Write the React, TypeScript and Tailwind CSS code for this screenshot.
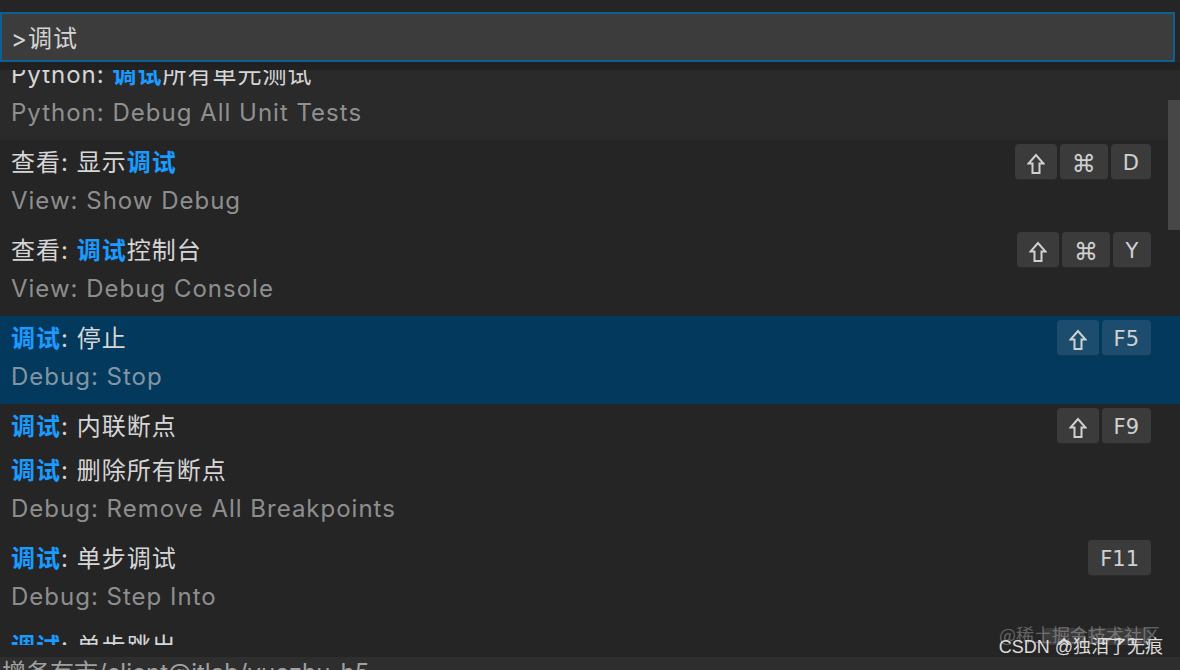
import { Fragment } from 'react'

const FONT = "font-['Inter','Noto_Sans_CJK_SC',sans-serif]"

type Item = {
    title: string
    detail?: string
    keys?: string[]
    selected?: boolean
    hover?: boolean
    clip?: boolean
    pull?: boolean
}

const items: Item[] = [
    {
        title: 'Python: [调试]所有单元测试',
        detail: 'Python: Debug All Unit Tests',
        hover: true,
        pull: true,
    },
    {
        title: '查看: 显示[调试]',
        detail: 'View: Show Debug',
        keys: ['shift', '⌘', 'D'],
    },
    {
        title: '查看: [调试]控制台',
        detail: 'View: Debug Console',
        keys: ['shift', '⌘', 'Y'],
    },
    {
        title: '[调试]: 停止',
        detail: 'Debug: Stop',
        keys: ['shift', 'F5'],
        selected: true,
    },
    { title: '[调试]: 内联断点', keys: ['shift', 'F9'] },
    { title: '[调试]: 删除所有断点', detail: 'Debug: Remove All Breakpoints' },
    { title: '[调试]: 单步调试', detail: 'Debug: Step Into', keys: ['F11'] },
    { title: '[调试]: 单步跳出', keys: ['shift', 'F11'], clip: true },
]

// splits "[..]" parts out as the matched (blue) text
function Highlight({ text }: { text: string }) {
    const parts = text.split(/(\[[^\]]+\])/)
    return (
        <>
            {parts.map((p, i) =>
                p.startsWith('[') ? (
                    <span key={i} className="text-[#1a9bff] font-bold">
                        {p.slice(1, -1)}
                    </span>
                ) : (
                    <Fragment key={i}>{p}</Fragment>
                )
            )}
        </>
    )
}

function ShiftIcon() {
    return (
        <svg width="18" height="22" viewBox="0 0 18 22" fill="none">
            <path
                d="M9 2 L1.5 10.5 H5.5 V20 H12.5 V10.5 H16.5 Z"
                stroke="#d0d0d0"
                strokeWidth="2"
                strokeLinejoin="miter"
            />
        </svg>
    )
}

function Key({ label }: { label: string }) {
    return (
        <div
            className={`h-[36px] min-w-[38px] px-3 pt-[4px] flex items-center justify-center rounded-[4px] bg-white/10 border-b border-black/25 text-[#d0d0d0] font-['DejaVu_Sans','Inter',sans-serif] ${label === '⌘' ? 'text-[24px]' : 'text-[21px]'}`}
        >
            {label === 'shift' ? <ShiftIcon /> : label}
        </div>
    )
}

function Row({ item }: { item: Item }) {
    let bg = ''
    if (item.selected) bg = 'bg-[#04395e]'
    else if (item.hover) bg = 'bg-[#2a2a2b]'

    let height = item.detail ? 'h-[88px]' : 'h-[44px]'
    if (item.clip) height = 'h-[21px] overflow-hidden'

    return (
        <div
            className={`${bg} ${height} ${item.pull ? '-mt-[18px]' : ''} relative pl-[11px] pr-[29px] pt-[4px] shrink-0`}
        >
            <div className="flex items-start">
                <div className="flex-1 tracking-[1px]">
                    <div className="h-[38px] leading-[38px] text-[24px] text-[#d6d6d6] whitespace-nowrap">
                        <Highlight text={item.title} />
                    </div>
                    {item.detail && (
                        <div className="h-[38px] leading-[38px] text-[24px] text-[#cccccc]/65 whitespace-nowrap">
                            {item.detail}
                        </div>
                    )}
                </div>
                {item.keys && (
                    <div className="flex gap-[3px]">
                        {item.keys.map((k) => (
                            <Key key={k} label={k} />
                        ))}
                    </div>
                )}
            </div>
        </div>
    )
}

export default function App() {
    return (
        <div
            className={`${FONT} w-[1180px] h-[670px] bg-[#252526] flex flex-col overflow-hidden relative`}
        >
            <div className="pt-[12px] pr-[5px]">
                <div className="h-[50px] bg-[#3c3c3c] border-2 border-[#0e5f94] pl-[9px] pt-[3px] flex items-center text-[24px] tracking-[1px] text-[#d4d4d4]">
                    &gt;调试
                </div>
            </div>
            <div className="h-[8px] bg-[#212121]" />

            <div className="flex-1 relative overflow-hidden flex flex-col">
                {items.map((item, i) => (
                    <Row key={i} item={item} />
                ))}
                {/* scrollbar thumb */}
                <div className="absolute right-0 top-[30px] w-[12px] h-[130px] bg-[#474747]" />
            </div>

            <div className="h-[13px] bg-[#2e2e2e] overflow-hidden pl-[2px]">
                <div className="text-[24px] leading-none pt-[4px] text-[#a0a0a0] whitespace-nowrap">
                    增务有市/client@itlab/vuezhu-h5
                </div>
            </div>

            {/* watermarks */}
            <div className="absolute right-[20px] bottom-[22px] text-[18px] text-white/30 font-['Noto_Sans_CJK_SC',sans-serif]">
                @稀土掘金技术社区
            </div>
            <div className="absolute right-[17px] bottom-[9px] text-[18px] text-[#dcdcdc] font-['Liberation_Sans','Noto_Sans_CJK_SC',sans-serif]">
                CSDN @独泪了无痕
            </div>
        </div>
    )
}
